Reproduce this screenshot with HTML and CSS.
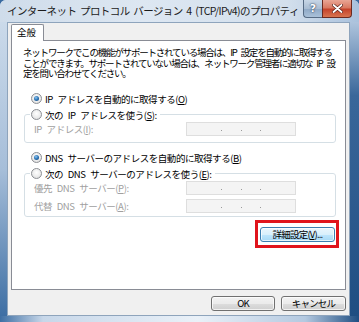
FILE: index.html
```html
<!DOCTYPE html>
<html lang="ja">
<head>
<meta charset="utf-8">
<link rel="stylesheet" href="styles.css">
</head>
<body>
<div class="window">
  <div class="titlebar">
    <span class="title">インターネット プロトコル バージョン 4 (TCP/IPv4)のプロパティ</span>
    <div class="caps">
      <span class="cap help">?</span>
      <span class="cap close"><svg width="11" height="9" viewBox="0 0 11 9"><path d="M1.5 1 L9.5 8 M9.5 1 L1.5 8" stroke="#5a2018" stroke-width="3.2" stroke-linecap="round"/><path d="M1.5 1 L9.5 8 M9.5 1 L1.5 8" stroke="#fff" stroke-width="1.8" stroke-linecap="round"/></svg></span>
    </div>
  </div>
  <div class="mid">
    <div class="fl"></div>
    <div class="client">
      <div class="tabs"><div class="tab">全般</div></div>
      <div class="panel">
        <p class="desc">ネットワークでこの機能がサポートされている場合は、IP 設定を自動的に取得する<br>ことができます。サポートされていない場合は、ネットワーク管理者に適切な IP 設<br>定を問い合わせてください。</p>
        <div class="row r1"><span class="radio on"></span><span>IP アドレスを自動的に取得する(<u>O</u>)</span></div>
        <fieldset class="group g1">
          <legend><span class="radio"></span><span>次の IP アドレスを使う(<u>S</u>):</span></legend>
          <div class="frow"><span class="flabel">IP アドレス(<u>I</u>):</span><span class="ipbox"><i></i><i></i><i></i></span></div>
        </fieldset>
        <div class="row r3"><span class="radio on"></span><span>DNS サーバーのアドレスを自動的に取得する(<u>B</u>)</span></div>
        <fieldset class="group g2">
          <legend><span class="radio"></span><span>次の DNS サーバーのアドレスを使う(<u>E</u>):</span></legend>
          <div class="frow"><span class="flabel">優先 DNS サーバー(<u>P</u>):</span><span class="ipbox"><i></i><i></i><i></i></span></div>
          <div class="frow"><span class="flabel">代替 DNS サーバー(<u>A</u>):</span><span class="ipbox"><i></i><i></i><i></i></span></div>
        </fieldset>
        <div class="mark"><button class="btn adv">詳細設定(<u>V</u>)...</button></div>
      </div>
      <div class="footer">
        <button class="btn ok">OK</button>
        <button class="btn cancel">キャンセル</button>
      </div>
    </div>
    <div class="fr"></div>
  </div>
  <div class="fb"></div>
</div>
</body>
</html>
```

FILE: styles.css
```css
* { box-sizing: border-box; margin: 0; padding: 0; }
html, body { width: 359px; height: 322px; overflow: hidden; background: #3a6aa0; }
body { font-family: "Noto Sans CJK JP", "Noto Sans", sans-serif; color: #000; }

.window {
  width: 359px; height: 322px;
  display: flex; flex-direction: column;
  background: #c6d6e8;
  border-radius: 6px 6px 0 0;
  overflow: hidden;
}

.titlebar {
  height: 22px; flex: none;
  display: flex; align-items: flex-start;
  background: linear-gradient(90deg, #cfdcea 0%, #dde7f2 40%, #d3dfec 80%, #a9c1dc 100%);
}
.title {
  flex: 1;
  font-size: 10.5px; letter-spacing: -0.6px; word-spacing: 2px;
  line-height: 22px; padding-left: 7px;
  color: #1b1b1b; white-space: nowrap; overflow: hidden;
}
.caps { display: flex; margin-right: 7px; flex: none; }
.cap {
  height: 18px;
  display: flex; align-items: center; justify-content: center;
  border: 1px solid #566b84; border-top: none;
}
.help {
  width: 19px; border-right: none;
  border-radius: 0 0 0 4px;
  background: linear-gradient(180deg, #c7d6e6 0%, #a9bdd3 50%, #8ea8c5 51%, #aac1d9 100%);
  color: #fff; font: bold 11px "DejaVu Sans", sans-serif;
  text-shadow: 0 0 2px #2a3e58, 0 0 1px #2a3e58;
}
.close {
  width: 30px;
  border-color: #6b2a20;
  border-radius: 0 0 4px 0;
  background: linear-gradient(180deg, #e9a595 0%, #d97a63 45%, #c5432b 55%, #d8744f 100%);
}

.mid { flex: 1; display: flex; min-height: 0; }
.fl { width: 7px; flex: none; background: linear-gradient(180deg, #cbdaea 0%, #a6bed9 50%, #3e6fa4 100%); }
.fr { width: 9px; flex: none; background: linear-gradient(180deg, #aec4dd 0%, #3a679a 25%, #1f4e82 100%); }
.fb { height: 6px; flex: none; background: linear-gradient(90deg, #3e6fa4 0%, #c7d7e9 12%, #eaf1f8 55%, #b4c9e0 85%, #1f4e82 100%); }

.client {
  width: 343px; flex: none;
  background: #f0f0f0;
  border: 1px solid #8ea4bc;
  padding: 1px 3px 4px;
  display: flex; flex-direction: column;
}

.tabs { display: flex; height: 17px; }
.tab {
  position: relative; z-index: 1;
  width: 33px; height: 17px;
  background: #fff;
  border: 1px solid #898c95; border-bottom: none;
  border-radius: 2px 2px 0 0;
  font-size: 9.5px; line-height: 15px;
  padding-left: 5px;
}

.panel {
  height: 250px; margin-top: -1px;
  background: #fff;
  border: 1px solid #898c95;
  display: flex; flex-direction: column;
  font-size: 9.5px; letter-spacing: -0.45px; word-spacing: 3px;
}

.desc { margin: 6px 0 0 11px; line-height: 10.5px; white-space: nowrap; letter-spacing: -1.2px; }

.row { display: flex; align-items: center; height: 14px; margin-left: 19px; white-space: nowrap; }
.r1 { margin-top: 13px; }
.r3 { margin-top: 8px; }

.radio {
  width: 11px; height: 11px; flex: none;
  border-radius: 50%;
  border: 1px solid #8c8f94;
  background: radial-gradient(circle at 50% 40%, #ffffff 0%, #eaeaea 60%, #d4d4d4 100%);
  margin-right: 3px;
  display: flex; align-items: center; justify-content: center;
}
.radio.on::after {
  content: ""; width: 5px; height: 5px; border-radius: 50%;
  background: radial-gradient(circle at 40% 35%, #8fc6f0 0%, #2a73b5 50%, #123f70 100%);
}

.group {
  margin: 2px 9px 0 12px;
  border: 1px solid #d5dfe5; border-radius: 3px;
  padding: 0 0 6px 9px;
  min-width: 0;
}
.group legend {
  display: flex; align-items: center;
  height: 14px; margin-left: -4px; padding: 0 3px 0 1px;
  white-space: nowrap;
}
.g2 { padding-bottom: 3px; }

.frow { display: grid; grid-template-columns: 152px 110px; align-items: center; height: 14px; }
.frow + .frow { margin-top: 4px; }
.flabel { color: #a0a0a0; white-space: nowrap; }
.ipbox {
  height: 14px;
  background: #f4f4f4;
  border: 1px solid #dedede;
  display: flex; justify-content: space-evenly; align-items: center;
  padding: 3px 16px 0;
}
.ipbox i { width: 1px; height: 1px; background: #9a9a9a; }

.mark {
  align-self: flex-end;
  margin: 3px 6px 0 0;
  border: 3px solid #e0141c;
  padding: 4px 1px 3px 2px;
}

.btn {
  height: 15px;
  font-family: "Noto Sans CJK JP", "Noto Sans", sans-serif;
  font-size: 9.5px; letter-spacing: -0.8px; line-height: 13px;
  color: #000;
  border: 1px solid #707070; border-radius: 3px;
  background: linear-gradient(180deg, #f2f2f2 0%, #ebebeb 50%, #dddddd 51%, #cfcfcf 100%);
  box-shadow: inset 0 0 0 1px rgba(255,255,255,0.7);
}
.adv {
  width: 75px;
  border-color: #3c7fb1;
  background: linear-gradient(180deg, #eaf6fd 0%, #d9f0fc 50%, #bee6fd 51%, #a7d9f5 100%);
}
.footer { display: flex; justify-content: flex-end; gap: 6px; margin-top: 6px; }
.ok { width: 64px; }
.cancel { width: 65px; }
```
